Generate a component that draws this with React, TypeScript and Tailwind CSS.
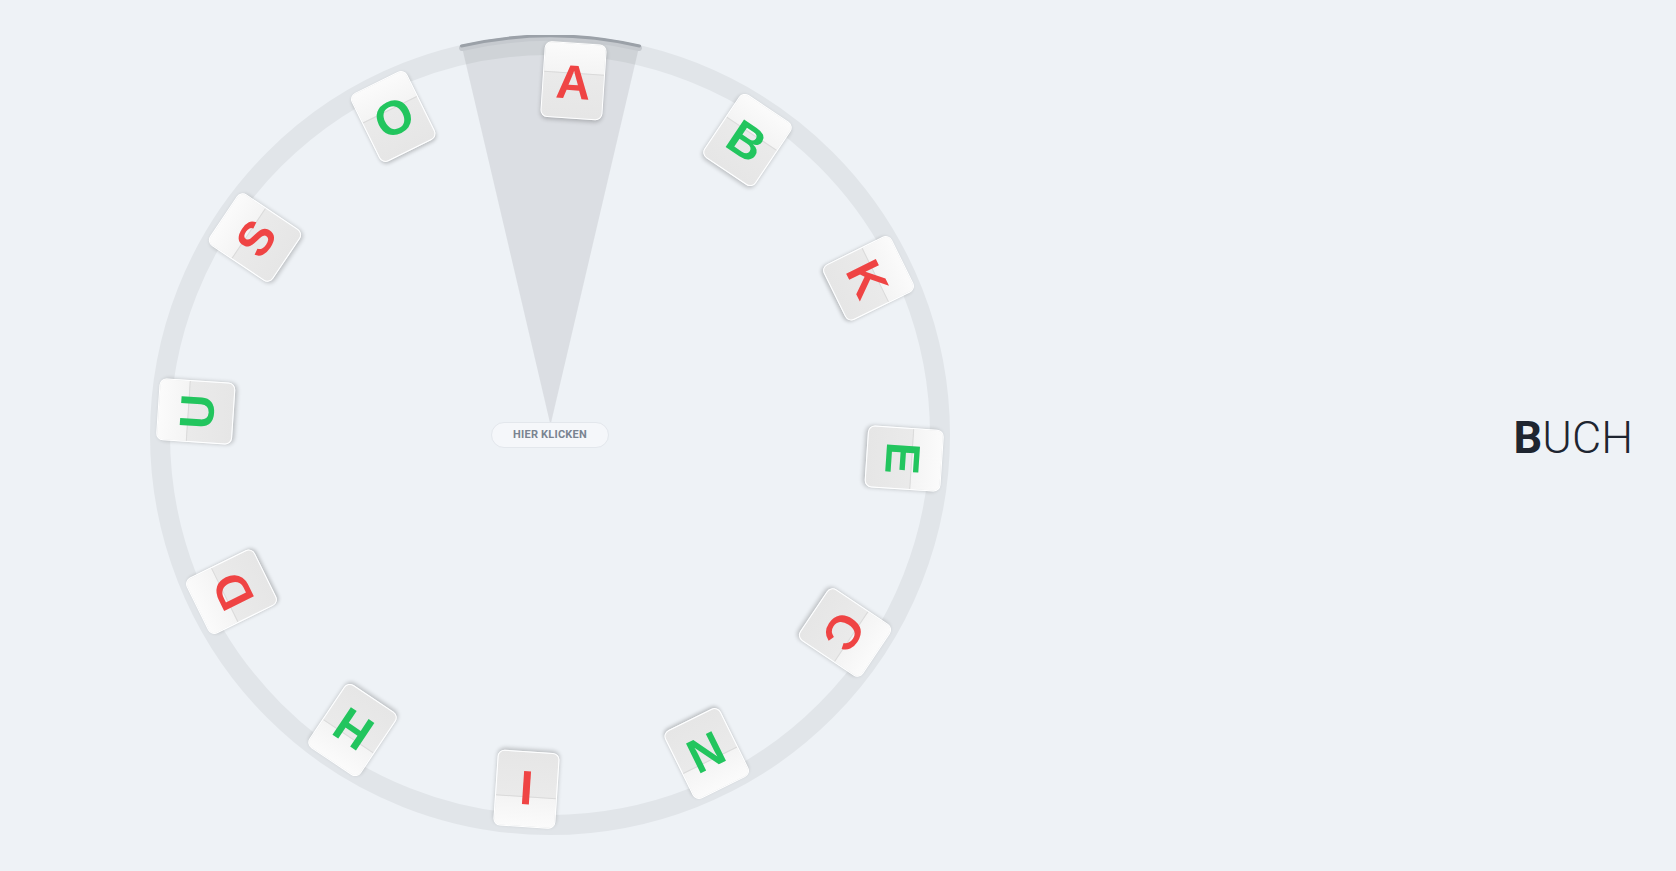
import React from "react"

const letters = [
  { ch: "A", red: true },
  { ch: "B", red: false },
  { ch: "K", red: true },
  { ch: "E", red: false },
  { ch: "C", red: true },
  { ch: "N", red: false },
  { ch: "I", red: true },
  { ch: "H", red: false },
  { ch: "D", red: true },
  { ch: "U", red: false },
  { ch: "S", red: true },
  { ch: "O", red: false },
]

const OFFSET = 3.8
const RADIUS = 355

function Tile({ ch, red, angle }: { ch: string; red: boolean; angle: number }) {
  return (
    <div
      className="absolute left-1/2 top-1/2 w-[62px] h-[76px]"
      style={{
        transform: `translate(-50%, -50%) rotate(${angle}deg) translateY(-${RADIUS}px)`,
      }}
    >
      <div className="relative w-full h-full rounded-[7px] border border-white bg-gradient-to-b from-[#ededed] to-[#e6e6e6] shadow-[0_2px_4px_rgba(0,0,0,0.22)] overflow-hidden">
        <div className="h-[30px] bg-gradient-to-b from-[#fbfbfb] to-[#f4f4f4] border-b border-[#dadada]" />
        <div
          className={`absolute inset-0 flex items-center justify-center pt-[4px] text-[48px] font-bold leading-none ${
            red ? "text-[#ef4444]" : "text-[#22c55e]"
          }`}
          style={{ fontFamily: '"Liberation Sans", Arial, sans-serif' }}
        >
          {ch}
        </div>
      </div>
    </div>
  )
}

function Wheel() {
  return (
    <div className="relative w-[800px] h-[800px] shrink-0">
      <svg className="absolute inset-0" width="800" height="800" viewBox="0 0 800 800">
        <circle cx="400" cy="400" r="390" fill="none" stroke="#e1e5e9" strokeWidth="20" />
        <path d="M 400.5 390 L 311.5 10 A 400 400 0 0 1 489.5 10 Z" fill="rgba(90,96,104,0.13)" />
        <path
          d="M 312 13 A 396 396 0 0 1 489 13"
          fill="none"
          stroke="#c6cacf"
          strokeWidth="6"
          strokeLinecap="round"
        />
        <path
          d="M 311.5 11 A 398.5 398.5 0 0 1 489.5 11"
          fill="none"
          stroke="#9ba1a8"
          strokeWidth="3"
          strokeLinecap="round"
        />
      </svg>

      {letters.map((l, i) => (
        <Tile key={l.ch} ch={l.ch} red={l.red} angle={OFFSET + i * 30} />
      ))}

      <button className="absolute left-1/2 top-1/2 -translate-x-1/2 -translate-y-1/2 w-[118px] h-[26px] rounded-full border border-[#e3e7ec] bg-[#f5f7fa] text-[11px] font-bold tracking-[0.02em] text-[#7a8491] font-['Roboto',sans-serif]">
        HIER KLICKEN
      </button>
    </div>
  )
}

export default function App() {
  return (
    <div className="w-full h-screen bg-[#eef2f6] flex items-center overflow-hidden">
      <div className="pl-[150px] mt-[-1px]">
        <Wheel />
      </div>
      <div className="flex-1 flex justify-end pr-[43px] pt-[4px]">
        <h1 className="text-[45px] leading-none text-[#1e2530] font-['Roboto',sans-serif]">
          <span className="font-bold">B</span>
          <span className="font-light">UCH</span>
        </h1>
      </div>
    </div>
  )
}
